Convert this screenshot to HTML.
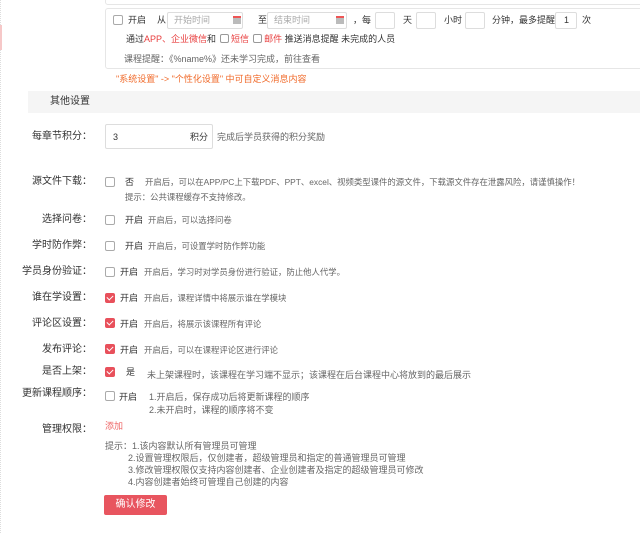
<!DOCTYPE html>
<html><head><meta charset="utf-8"><style>
*{margin:0;padding:0;box-sizing:border-box}
body{width:640px;height:533px;background:#fff;font-family:"Liberation Sans","Noto Sans CJK SC",sans-serif;font-size:9px;color:#333;position:relative;overflow:hidden}
.a{position:absolute;white-space:nowrap;line-height:12px}
.g{color:#666}
.r{color:#e83e3e}
.o{color:#f06a2a}
.cb{position:absolute;width:10px;height:10px;border:1px solid #aaa;border-radius:2px;background:#fff}
.ib{display:inline-block;vertical-align:-1px;width:9px;height:9px;border:1px solid #999;border-radius:2px;margin:0 2px 0 4px}
.ck{position:absolute;width:10px;height:10px;border-radius:2px;background:#e8505b}
.ck:after{content:"";position:absolute;left:3px;top:1px;width:3px;height:5px;border:solid #fff;border-width:0 1.5px 1.5px 0;transform:rotate(45deg)}
.in{position:absolute;border:1px solid #ddd;border-radius:2px;background:#fff;height:17px}
.lb{position:absolute;right:calc(640px - 92px);white-space:nowrap;font-size:10px;line-height:12px;color:#333}
.cal{position:absolute;width:8px;height:8px;background:#bbb;border-top:2px solid #e55}
</style></head><body>
<div style="position:absolute;left:0;top:0;width:2px;height:533px;border-left:1px dotted #ddd"></div>
<div style="position:absolute;left:0;top:25px;width:2px;height:25px;background:#f6c8c8"></div>
<div style="position:absolute;left:105px;top:-2px;width:540px;height:7px;border:1px solid #e6e6e6;border-radius:3px"></div>
<div style="position:absolute;left:105px;top:8px;width:540px;height:61px;border:1px solid #e6e6e6;border-radius:3px"></div>
<div class="cb" style="left:113px;top:15px"></div>
<div class="a" style="left:128px;top:14px">开启</div>
<div class="a" style="left:157px;top:14px">从</div>
<div class="in" style="left:167px;top:12px;width:76px"></div><div class="a" style="left:174px;top:14px;color:#aaa">开始时间</div><div class="cal" style="left:233px;top:16px"></div>
<div class="a" style="left:258px;top:14px">至</div>
<div class="in" style="left:267px;top:12px;width:80px"></div><div class="a" style="left:274px;top:14px;color:#aaa">结束时间</div><div class="cal" style="left:336px;top:16px"></div>
<div class="a" style="left:353px;top:14px">，每</div>
<div class="in" style="left:375px;top:12px;width:20px"></div>
<div class="a" style="left:403px;top:14px">天</div>
<div class="in" style="left:416px;top:12px;width:20px"></div>
<div class="a" style="left:444px;top:14px">小时</div>
<div class="in" style="left:465px;top:12px;width:20px"></div>
<div class="a" style="left:492px;top:14px">分钟，最多提醒</div>
<div class="in" style="left:555px;top:12px;width:22px"></div><div class="a" style="left:564px;top:14px">1</div>
<div class="a" style="left:582px;top:14px">次</div>
<div class="a" style="left:126px;top:33px">通过<span class="r">APP、企业微信</span>和<span class="ib"></span><span class="r">短信</span><span class="ib"></span><span class="r">邮件</span> 推送消息提醒 未完成的人员</div>
<div class="a g" style="left:124px;top:53px">课程提醒：《%name%》还未学习完成，前往查看</div>
<div class="a o" style="left:116px;top:73px">"系统设置" -> "个性化设置" 中可自定义消息内容</div>
<div style="position:absolute;left:28px;top:91px;width:620px;height:22px;background:#f5f5f5"></div>
<div class="a" style="left:50px;top:96px;font-size:10px">其他设置</div>
<div class="lb" style="top:131px">每章节积分：</div>
<div class="in" style="left:105px;top:124px;width:108px;height:25px"></div>
<div class="a" style="left:113px;top:131px">3</div><div class="a" style="left:190px;top:131px">积分</div>
<div class="a g" style="left:217px;top:131px">完成后学员获得的积分奖励</div>
<div class="lb" style="top:176px">源文件下载：</div><div class="cb" style="left:105px;top:177px"></div>
<div class="a" style="left:125px;top:176px">否</div>
<div class="a g" style="left:145px;top:176px;font-size:8.4px">开启后，可以在APP/PC上下载PDF、PPT、excel、视频类型课件的源文件，下载源文件存在泄露风险，请谨慎操作！</div>
<div class="a g" style="left:125px;top:191px;font-size:8.4px">提示：公共课程缓存不支持修改。</div>
<div class="lb" style="top:214px">选择问卷：</div><div class="cb" style="left:105px;top:215px"></div>
<div class="a" style="left:125px;top:214px">开启</div><div class="a g" style="left:148px;top:214px;font-size:8.4px">开启后，可以选择问卷</div>
<div class="lb" style="top:240px">学时防作弊：</div><div class="cb" style="left:105px;top:241px"></div>
<div class="a" style="left:125px;top:240px">开启</div><div class="a g" style="left:148px;top:240px;font-size:8.4px">开启后，可设置学时防作弊功能</div>
<div class="lb" style="top:266px">学员身份验证：</div><div class="cb" style="left:105px;top:267px"></div>
<div class="a" style="left:120px;top:266px">开启</div><div class="a g" style="left:144px;top:266px;font-size:8.4px">开启后，学习时对学员身份进行验证，防止他人代学。</div>
<div class="lb" style="top:292px">谁在学设置：</div><div class="ck" style="left:105px;top:293px"></div>
<div class="a" style="left:120px;top:292px">开启</div><div class="a g" style="left:144px;top:292px;font-size:8.4px">开启后，课程详情中将展示谁在学模块</div>
<div class="lb" style="top:318px">评论区设置：</div><div class="ck" style="left:105px;top:318px"></div>
<div class="a" style="left:120px;top:318px">开启</div><div class="a g" style="left:144px;top:318px;font-size:8.4px">开启后，将展示该课程所有评论</div>
<div class="lb" style="top:344px">发布评论：</div><div class="ck" style="left:105px;top:344px"></div>
<div class="a" style="left:120px;top:344px">开启</div><div class="a g" style="left:144px;top:344px;font-size:8.4px">开启后，可以在课程评论区进行评论</div>
<div class="lb" style="top:366px">是否上架：</div><div class="ck" style="left:105px;top:367px"></div>
<div class="a" style="left:126px;top:366px">是</div><div class="a g" style="left:147px;top:369px">未上架课程时，该课程在学习端不显示；该课程在后台课程中心将放到的最后展示</div>
<div class="lb" style="top:388px">更新课程顺序：</div><div class="cb" style="left:105px;top:391px"></div>
<div class="a" style="left:119px;top:391px">开启</div>
<div class="a g" style="left:149px;top:391px">1.开启后，保存成功后将更新课程的顺序</div>
<div class="a g" style="left:149px;top:404px">2.未开启时，课程的顺序将不变</div>
<div class="lb" style="top:424px">管理权限：</div>
<div class="a r" style="left:105px;top:420px;color:#e66">添加</div>
<div class="a g" style="left:105px;top:440px">提示：1.该内容默认所有管理员可管理</div>
<div class="a g" style="left:128px;top:452px">2.设置管理权限后，仅创建者，超级管理员和指定的普通管理员可管理</div>
<div class="a g" style="left:128px;top:464px">3.修改管理权限仅支持内容创建者、企业创建者及指定的超级管理员可修改</div>
<div class="a g" style="left:128px;top:476px">4.内容创建者始终可管理自己创建的内容</div>
<div style="position:absolute;left:104px;top:495px;width:63px;height:20px;background:#e8555f;border-radius:2px;color:#fff;font-size:10px;line-height:20px;text-align:center">确认修改</div>
</body></html>
